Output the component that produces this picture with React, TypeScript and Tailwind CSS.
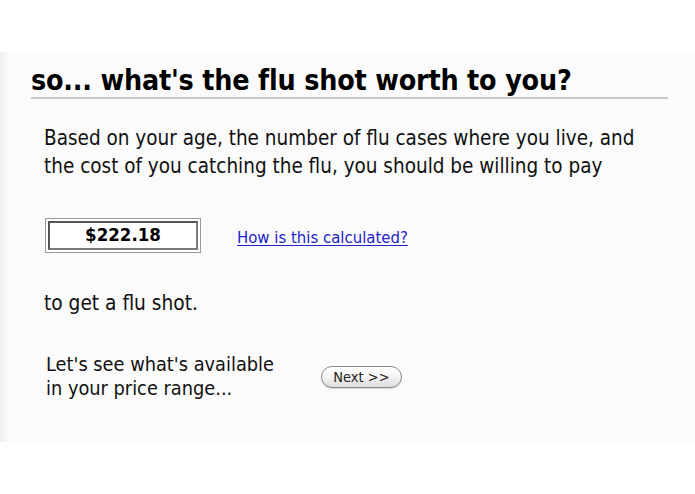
export default function App() {
  const font = { fontFamily: '"DejaVu Sans Condensed", "DejaVu Sans", sans-serif' };
  return (
    <div className="w-[695px] h-[494px] bg-white overflow-hidden" style={font}>
      <div className="h-[52px] bg-white" />
      <div className="relative h-[390px] bg-[#fbfbfb] bg-gradient-to-r from-[#f1f1f1] via-[#fbfbfb] via-[1.3%] to-[#fbfbfb] text-[#111]">
        <div className="pt-[13px] ml-[31px] mr-[27px] border-b-2 border-[#c9c9c9]">
          <h1 className="text-[28.4px] leading-[32px] font-bold tracking-[-0.2px] text-black">
            so... what's the flu shot worth to you?
          </h1>
        </div>
        <p className="mt-[25px] ml-[44px] text-[20.5px] leading-[28px]">
          Based on your age, the number of flu cases where you live, and
          <br />
          the cost of you catching the flu, you should be willing to pay
        </p>
        <div className="mt-[38px] ml-[45px] flex items-center gap-[36px]">
          <div className="w-[156px] h-[35px] border border-[#9a9a9a] p-[2px] bg-white">
            <div className="h-full border-2 border-t-[#555] border-l-[#555] border-b-[#7a7a7a] border-r-[#7a7a7a] flex items-center justify-center">
              <span className="text-[18.5px] font-bold text-black leading-none">$222.18</span>
            </div>
          </div>
          <a href="#" className="text-[16.6px] text-[#2222cc] underline underline-offset-2 mt-[5px]">
            How is this calculated?
          </a>
        </div>
        <p className="mt-[36px] ml-[44px] text-[20.7px] leading-[28px]">to get a flu shot.</p>
        <div className="mt-[36px] ml-[46px] flex items-center">
          <p className="w-[275px] text-[19.8px] leading-[24px]">
            Let's see what's available
            <br />
            in your price range...
          </p>
          <button className="w-[81px] h-[22px] rounded-full border border-[#8a8a8a] bg-gradient-to-b from-white via-[#f4f4f4] to-[#dcdcdc] text-[14.5px] text-[#222] leading-none shadow-[0_1px_1px_rgba(0,0,0,0.15)]">
            Next &gt;&gt;
          </button>
        </div>
      </div>
    </div>
  );
}
